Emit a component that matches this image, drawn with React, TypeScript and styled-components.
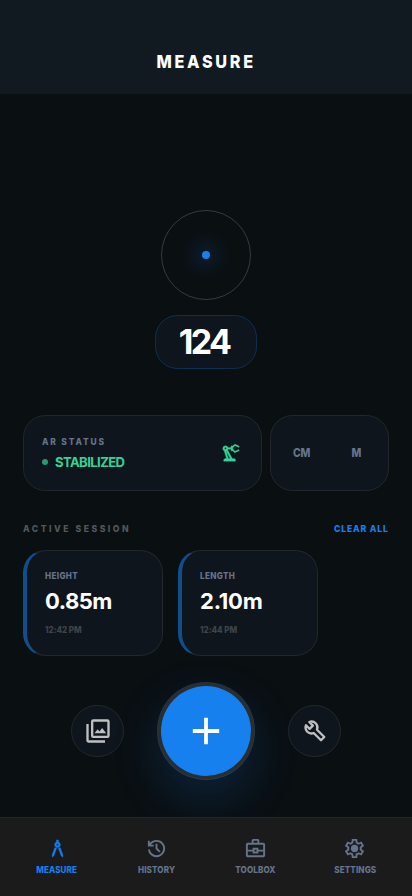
import React from "react";
import styled, { createGlobalStyle } from "styled-components";
import { MdOutlineArchitecture, MdOutlinePrecisionManufacturing } from "react-icons/md";

const blue = "#1580ee";
const slate = "#64748b";
const panel = "#0f151c";
const line = "#23272d";

const GlobalStyle = createGlobalStyle`
  * { box-sizing: border-box; }
  body { margin: 0; background: #0a0f12; }
  button { padding: 0; border: 0; background: none; font: inherit; color: inherit; }
  svg { display: block; flex: none; }
`;

const Screen = styled.div`
  display: flex;
  flex-direction: column;
  height: 896px;
  overflow: hidden;
  background: #0a0f12;
  color: #fff;
  font-family: Inter, sans-serif;
  font-weight: 700;
`;

const Header = styled.header`
  height: 94px;
  padding-top: 30px;
  display: flex;
  align-items: center;
  justify-content: center;
  background: #111921;
`;

const Text = styled.span<{ $size: number; $track?: number; $color?: string }>`
  display: block;
  margin: 0;
  white-space: nowrap;
  line-height: 1;
  font-size: ${(p) => p.$size}px;
  letter-spacing: ${(p) => p.$track ?? 0}px;
  color: ${(p) => p.$color ?? "#fff"};
  font-weight: 700;
`;

/* Condensed capitals used for headings and captions. */
const Caption = styled(Text)<{ $origin?: "left" | "center" | "right" }>`
  font-weight: 800;
  transform: scaleX(0.9);
  transform-origin: ${(p) => p.$origin ?? "left"} center;
`;

const Viewfinder = styled.section`
  height: 321px;
  padding-top: 116px;
  display: flex;
  flex-direction: column;
  align-items: center;
  gap: 15px;
`;

const Reticle = styled.div`
  width: 90px;
  height: 90px;
  display: flex;
  align-items: center;
  justify-content: center;
  border: 1px solid #373b3e;
  border-radius: 50%;
  background: radial-gradient(circle, rgba(21, 128, 238, 0.1) 0, rgba(21, 128, 238, 0) 24px);
`;

const Dot = styled.span<{ $size: number; $color: string }>`
  width: ${(p) => p.$size}px;
  height: ${(p) => p.$size}px;
  border-radius: 50%;
  background: ${(p) => p.$color};
`;

const Readout = styled.div`
  width: 102px;
  height: 54px;
  padding: 0 4px 1px 0;
  display: flex;
  align-items: center;
  justify-content: center;
  border: 1px solid #0f2f52;
  border-radius: 22.5px;
  background: ${panel};
`;

const StatusGrid = styled.section`
  height: 76px;
  margin: 0 23px;
  display: grid;
  grid-template-columns: 2fr 1fr;
  gap: 8px;
`;

const Panel = styled.div`
  border: 1px solid ${line};
  border-radius: 22.5px;
  background: ${panel};
`;

const StatusPanel = styled(Panel)`
  padding: 0 19px 0 18px;
  display: flex;
  align-items: center;
  justify-content: space-between;
`;

const StatusCopy = styled.div`
  display: flex;
  flex-direction: column;
  gap: 9px;
`;

const StatusLine = styled.div`
  display: flex;
  align-items: center;
  gap: 7px;
`;

const UnitPanel = styled(Panel)`
  padding: 2px 4px 0;
  display: grid;
  grid-template-columns: 1fr 1fr;
  align-items: center;
  justify-items: center;
`;

const SessionHead = styled.div`
  height: 59px;
  margin: 0 23px;
  padding-top: 16px;
  display: flex;
  align-items: center;
  justify-content: space-between;
`;

const Readings = styled.section`
  display: flex;
  gap: 15px;
  padding-left: 23px;
`;

const ReadingCard = styled(Panel)`
  width: 140px;
  height: 106px;
  padding: 20px 0 0 18px;
  border-left: 4px solid #124d8c;
`;

const ReadingValue = styled(Text)`
  margin: 10px 0 13px;
`;

const Actions = styled.section`
  height: 98px;
  margin-top: 26px;
  display: flex;
  align-items: center;
  justify-content: center;
  gap: 33.5px;
`;

const RoundButton = styled.button`
  width: 52.5px;
  height: 52.5px;
  display: flex;
  align-items: center;
  justify-content: center;
  border: 1px solid ${line};
  border-radius: 50%;
  background: ${panel};
  color: #bec0c2;
`;

const AddButton = styled.button`
  width: 97.5px;
  height: 97.5px;
  display: flex;
  align-items: center;
  justify-content: center;
  border: 4px solid rgba(255, 255, 255, 0.13);
  border-radius: 50%;
  background: ${blue} padding-box;
  box-shadow: 0 19px 47px rgba(21, 128, 238, 0.18);
`;

const Nav = styled.nav`
  position: relative;
  height: 79px;
  margin-top: auto;
  padding: 19px 7.5px 0;
  display: grid;
  grid-template-columns: repeat(4, 1fr);
  border-top: 1px solid #252728;
  background: #1b1b1c;
`;

const NavItem = styled.button<{ $active?: boolean }>`
  height: 38px;
  display: flex;
  flex-direction: column;
  align-items: center;
  gap: 4.5px;
  color: ${(p) => (p.$active ? blue : slate)};
`;

const CompassIcon = styled(MdOutlineArchitecture).attrs({ size: 23 })`
  path:not([fill="none"]) {
    stroke: currentColor;
    stroke-width: 0.4;
  }
`;

const RobotArmIcon = styled(MdOutlinePrecisionManufacturing).attrs({ size: 22 })`
  color: #34d399;
  path:not([fill="none"]) {
    stroke: currentColor;
    stroke-width: 0.3;
  }
`;

const HistoryIcon = () => (
  <svg width="23" height="23" viewBox="0 0 24 24" fill="currentColor">
    <path d="M12 21q-3.45 0-6.01-2.29T3.05 13H5.1q.35 2.6 2.31 4.3T12 19q2.925 0 4.96-2.04T19 12t-2.04-4.96T12 5q-1.725 0-3.225.8T6.25 8H9v2H3V4h2v2.35q1.275-1.6 3.11-2.475T12 3q1.875 0 3.51.71t2.85 1.93 1.93 2.85T21 12t-.71 3.51-1.93 2.85-2.85 1.93T12 21Zm2.8-4.8L11 12.4V7h2v4.6l3.2 3.2-1.4 1.4Z" />
  </svg>
);

const ToolboxIcon = () => (
  <svg width="23" height="23" viewBox="0 0 24 24" fill="none" stroke="currentColor" strokeWidth="2">
    <rect x="3" y="7" width="18" height="13" rx="0.8" />
    <path d="M9 7V3.6q0-.6.6-.6h4.8q.6 0 .6.6V7M3 14.2h7M14 14.2h7M10 12.2h4v4h-4Z" />
  </svg>
);

const GearIcon = () => (
  <svg width="23" height="23" viewBox="0 0 24 24" fill="currentColor">
    <path
      fillRule="evenodd"
      d="m9.25 22-.4-3.2q-.325-.125-.61-.3t-.565-.375L4.7 19.375l-2.75-4.75 2.575-1.95Q4.5 12.5 4.5 12.34v-.68q0-.16.025-.335L1.95 9.375l2.75-4.75 2.975 1.25q.275-.2.575-.375t.6-.3l.4-3.2h5.5l.4 3.2q.325.125.61.3t.565.375l2.975-1.25 2.75 4.75-2.575 1.95q.025.175.025.335v.68q0 .16-.05.335l2.575 1.95-2.75 4.75-2.95-1.25q-.275.2-.575.375t-.6.3l-.4 3.2ZM11 20h1.975l.35-2.65q.775-.2 1.44-.59t1.21-.935l2.475 1.025.975-1.7-2.15-1.625q.125-.35.175-.74T17.5 12t-.05-.79-.175-.735l2.15-1.625-.975-1.7-2.475 1.05q-.55-.575-1.21-.96t-1.44-.59L13 4h-1.975l-.35 2.65q-.775.2-1.44.59t-1.21.935L5.55 7.15l-.975 1.7 2.15 1.6q-.125.375-.175.75T6.5 12q0 .4.05.775t.175.75l-2.15 1.625.975 1.7 2.475-1.05q.55.575 1.21.96t1.44.59Z"
    />
    <circle cx="12.05" cy="12" r="3.8" />
  </svg>
);

const GalleryIcon = () => (
  <svg width="28" height="28" viewBox="0 0 24 24" fill="none" stroke="currentColor" strokeWidth="2">
    <rect x="7" y="3" width="14" height="14" rx="0.9" />
    <path d="M3 6v14.2q0 .8.8.8H18" />
    <path d="M9 14h10l-3.45-4.5-2.3 3-1.55-2Z" fill="currentColor" stroke="none" />
  </svg>
);

const WrenchIcon = () => (
  <svg width="24" height="24" viewBox="0 0 24 24" fill="none" stroke="currentColor" strokeWidth="2.3" strokeLinejoin="round">
    <path d="M6.3 3A5.92 5.92 0 0 1 14 10.7L21.3 18 18 21.3 10.7 14A5.92 5.92 0 0 1 3 6.3L6.6 9.9 9.9 6.6Z" />
  </svg>
);

const PlusIcon = () => (
  <svg width="28" height="28" viewBox="0 0 28 28" fill="none" stroke="#fff" strokeWidth="3.8">
    <path d="M14 .8v26.4M.8 14h26.4" />
  </svg>
);

const readings = [
  { name: "HEIGHT", value: "0.85m", time: "12:42 PM", track: -0.5 },
  { name: "LENGTH", value: "2.10m", time: "12:44 PM", track: -0.2 },
];

const tabs = [
  { label: "MEASURE", Icon: CompassIcon },
  { label: "HISTORY", Icon: HistoryIcon },
  { label: "TOOLBOX", Icon: ToolboxIcon },
  { label: "SETTINGS", Icon: GearIcon },
];

export default function App() {
  return (
    <Screen>
      <GlobalStyle />
      <Header>
        <Caption as="h1" $size={18} $track={3} $origin="center">MEASURE</Caption>
      </Header>
      <Viewfinder>
        <Reticle>
          <Dot $size={8} $color={blue} />
        </Reticle>
        <Readout>
          <Text $size={34} $track={-2.6}>124</Text>
        </Readout>
      </Viewfinder>
      <StatusGrid>
        <StatusPanel>
          <StatusCopy>
            <Caption $size={9.4} $track={2} $color={slate}>AR STATUS</Caption>
            <StatusLine>
              <Dot $size={6} $color="#289a72" />
              <Text $size={13.1} $track={-0.6} $color="#34d399">STABILIZED</Text>
            </StatusLine>
          </StatusCopy>
          <RobotArmIcon />
        </StatusPanel>
        <UnitPanel>
          <Caption $size={11.6} $track={-0.2} $color={slate} $origin="center">CM</Caption>
          <Caption $size={11.6} $track={-0.2} $color={slate} $origin="center">M</Caption>
        </UnitPanel>
      </StatusGrid>
      <SessionHead>
        <Caption $size={9.6} $track={2.8} $color="#54575a">ACTIVE SESSION</Caption>
        <Caption $size={9.6} $track={0.9} $color={blue} $origin="right">CLEAR ALL</Caption>
      </SessionHead>
      <Readings>
        {readings.map((r) => (
          <ReadingCard key={r.name}>
            <Caption $size={9} $track={0.4} $color={slate}>{r.name}</Caption>
            <ReadingValue $size={22} $track={r.track}>{r.value}</ReadingValue>
            <Caption $size={9} $track={-0.05} $color="#3f444a">{r.time}</Caption>
          </ReadingCard>
        ))}
      </Readings>
      <Actions>
        <RoundButton aria-label="Gallery">
          <GalleryIcon />
        </RoundButton>
        <AddButton aria-label="Add measurement">
          <PlusIcon />
        </AddButton>
        <RoundButton aria-label="Tools">
          <WrenchIcon />
        </RoundButton>
      </Actions>
      <Nav>
        {tabs.map(({ label, Icon }, i) => (
          <NavItem key={label} $active={i === 0}>
            <Icon />
            <Caption $size={9} $track={0.1} $color="inherit" $origin="center">{label}</Caption>
          </NavItem>
        ))}
      </Nav>
    </Screen>
  );
}
